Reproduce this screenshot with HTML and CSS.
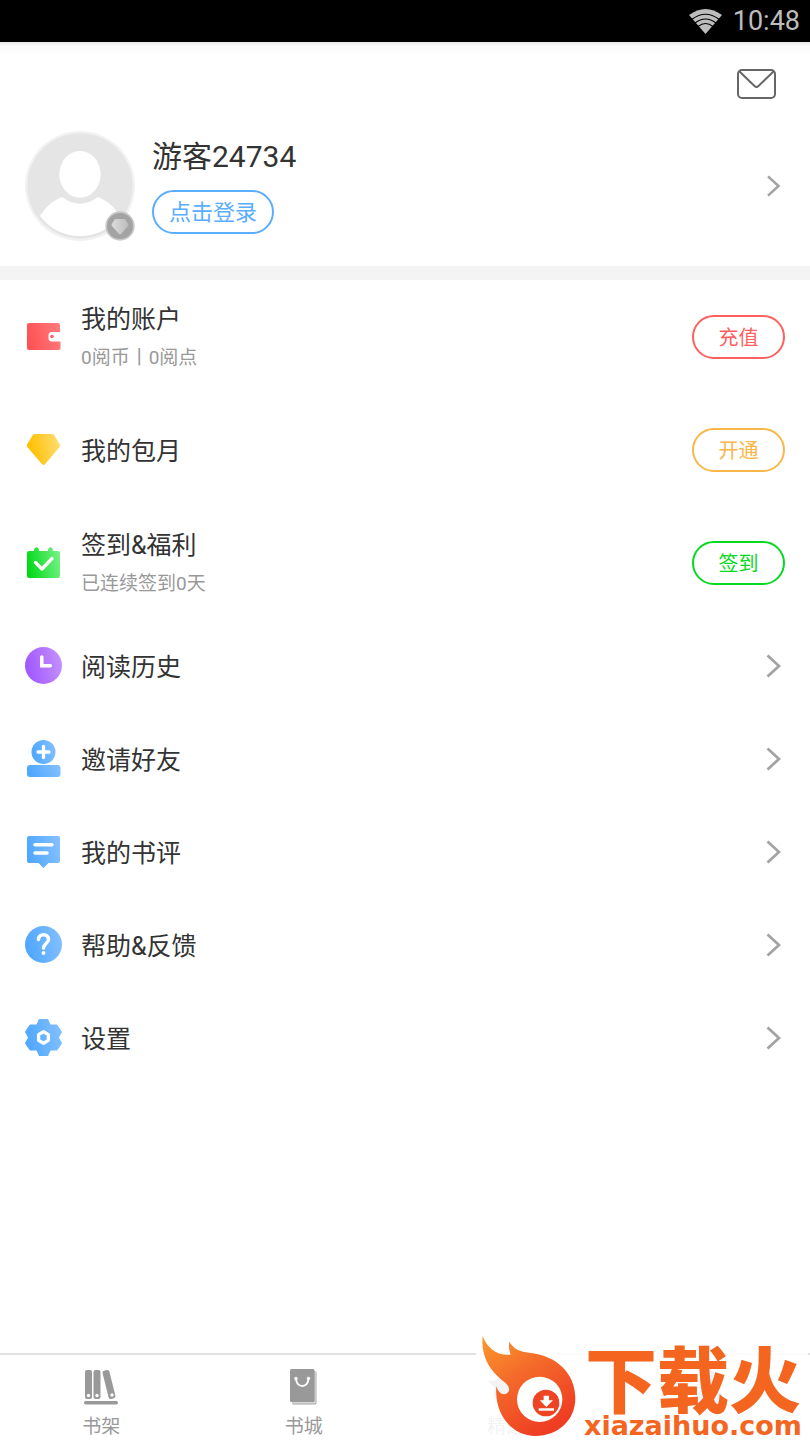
FILE: index.html
```html
<!DOCTYPE html>
<html lang="zh-CN">
<head>
<meta charset="utf-8">
<meta name="viewport" content="width=device-width, initial-scale=1">
<title>我的</title>
<link rel="stylesheet" href="styles.css">
</head>
<body>
<svg class="defs" width="0" height="0" aria-hidden="true">
  <defs>
    <linearGradient id="red" x1="0" x2="1" y1=".6" y2=".4"><stop stop-color="#ff5054"/><stop offset="1" stop-color="#ff7a7a"/></linearGradient>
    <linearGradient id="gold" x1="0" x2="1" y1=".6" y2=".4"><stop offset=".1" stop-color="#ffc000"/><stop offset="1" stop-color="#ffdc6e"/></linearGradient>
    <linearGradient id="green" x1="0" x2="1" y1=".6" y2=".4"><stop stop-color="#00d916"/><stop offset="1" stop-color="#74f184"/></linearGradient>
    <linearGradient id="purple" x1="0" x2="1" y1=".6" y2=".4"><stop stop-color="#9f55ff"/><stop offset="1" stop-color="#c490ff"/></linearGradient>
    <linearGradient id="blue" x1="0" x2="1" y1=".6" y2=".4"><stop stop-color="#4da6ff"/><stop offset="1" stop-color="#82bfff"/></linearGradient>
    <linearGradient id="silver" x1="0" x2="1"><stop stop-color="#dcdcdc"/><stop offset="1" stop-color="#bcbcbc"/></linearGradient>
    <linearGradient id="flame" x1="0" x2=".6" y1="0" y2="1"><stop stop-color="#fb9a2c"/><stop offset=".45" stop-color="#f46a2a"/><stop offset="1" stop-color="#ee3d23"/></linearGradient>
    <symbol id="chevron" viewBox="0 0 15 24"><path d="M1.500 1.500 13 12 1.500 22.500" fill="none" stroke="#a3a3a3" stroke-width="2.800"/></symbol>
  </defs>
</svg>

<div class="status">
  <svg class="wifi" viewBox="0 0 33 25" aria-hidden="true">
    <path fill="#bdbdbd" d="M16.500 25 0 6Q16.500-6 33 6Z"/>
    <g fill="none" stroke="#000" stroke-width="1.100"><path d="M3 10.200Q16.500.200 30 10.200"/><path d="M6 14Q16.500 6 27 14"/><path d="M9 17.500Q16.500 11.600 24 17.500"/></g>
  </svg>
  <time>10:48</time>
</div>

<header class="header">
  <button class="mail" aria-label="消息">
    <svg viewBox="0 0 39 30" aria-hidden="true"><g fill="none" stroke="#666" stroke-width="2"><rect x="1" y="1" width="37" height="28" rx="4"/><path d="m2 2 15.500 15q2 1.800 4 0L37 2"/></g></svg>
  </button>
  <div class="profile">
    <svg class="avatar" viewBox="0 0 330 330" aria-hidden="true">
      <circle cx="165" cy="165" r="165" fill="#f2f2f2"/><circle cx="165" cy="165" r="158" fill="#e5e5e5"/>
      <ellipse cx="165" cy="130" rx="62" ry="70" fill="#fff"/>
      <path fill="#fff" d="M45 255C60 231 83 208 112 199Q165 238 218 199C247 208 270 231 285 255A150 150 0 0 1 45 255Z"/>
      <circle cx="285" cy="285" r="44" fill="#c8c8c8"/><circle cx="285" cy="285" r="39" fill="#a3a3a3"/>
      <path fill="url(#silver)" d="M270 264h30l10 16q1 3-1 5l-21 24q-3 2-6 0l-21-24q-2-2-1-5Z"/>
    </svg>
    <div class="identity">
      <h1 class="name">游客24734</h1>
      <button class="pill login">点击登录</button>
    </div>
    <svg class="chevron small"><use href="#chevron"/></svg>
  </div>
</header>

<main class="main">
  <ul class="list">
    <li class="row tall">
      <svg class="icon" viewBox="0 0 37 37" aria-hidden="true"><path fill="url(#red)" d="M4 5h29a2 2 0 0 1 2 2v7h-8q-3.500 0-3.500 3.500v2.500q0 3.500 3.500 3.500h8.500v6.500a2 2 0 0 1-2 2H4a2 2 0 0 1-2-2V7a2 2 0 0 1 2-2Z"/><circle cx="27" cy="18.500" r="1.800" fill="#ff6266"/></svg>
      <div class="text"><h2 class="title">我的账户</h2><p class="sub">0阅币丨0阅点</p></div>
      <button class="pill recharge">充值</button>
    </li>
    <li class="row tall">
      <svg class="icon" viewBox="0 0 37 37" aria-hidden="true"><path fill="url(#gold)" d="M10 3h17q1.500 0 2.300 1.200l5.500 9.300q.7 1.200-.3 2.400L20 33.300q-1.500 1.500-3 0L2.300 16q-1-1.300-.3-2.500l5.700-9.300Q8.500 3 10 3Z"/></svg>
      <div class="text"><h2 class="title">我的包月</h2></div>
      <button class="pill open">开通</button>
    </li>
    <li class="row tall">
      <svg class="icon" viewBox="0 0 37 37" aria-hidden="true"><path fill="url(#green)" d="M4 7h5c0-5 5-5 5 0h9c0-5 5-5 5 0h5a2 2 0 0 1 2 2v23a2 2 0 0 1-2 2H4a2 2 0 0 1-2-2V9a2 2 0 0 1 2-2Z"/><path d="m10.500 18.500 6.500 6.500 10-10.500" fill="none" stroke="#fff" stroke-width="3.300" stroke-linecap="round" stroke-linejoin="round"/></svg>
      <div class="text"><h2 class="title">签到&amp;福利</h2><p class="sub">已连续签到0天</p></div>
      <button class="pill checkin">签到</button>
    </li>
    <li><a class="row" href="#history">
      <svg class="icon" viewBox="0 0 37 37" aria-hidden="true"><circle cx="18.500" cy="18.500" r="18.500" fill="url(#purple)"/><path d="M16.800 10v8.700h8.500" fill="none" stroke="#fff" stroke-width="3.500" stroke-linecap="round"/></svg>
      <span class="title">阅读历史</span><svg class="chevron"><use href="#chevron"/></svg></a></li>
    <li><a class="row" href="#invite">
      <svg class="icon" viewBox="0 0 37 37" aria-hidden="true"><circle cx="18.500" cy="12" r="12" fill="url(#blue)"/><path d="M18.500 6.500v11M13 12h11" stroke="#fff" stroke-width="3.300" stroke-linecap="round"/><rect x="2" y="25" width="33.500" height="12" rx="3" fill="url(#blue)"/></svg>
      <span class="title">邀请好友</span><svg class="chevron"><use href="#chevron"/></svg></a></li>
    <li><a class="row" href="#reviews">
      <svg class="icon" viewBox="0 0 37 37" aria-hidden="true"><path fill="url(#blue)" d="M4 3h29a2 2 0 0 1 2 2v23a2 2 0 0 1-2 2h-9.500l-5 5-5-5H4a2 2 0 0 1-2-2V5a2 2 0 0 1 2-2Z"/><path d="M10 11.700h17M10 20h12" stroke="#fff" stroke-width="3.500" stroke-linecap="round"/></svg>
      <span class="title">我的书评</span><svg class="chevron"><use href="#chevron"/></svg></a></li>
    <li><a class="row" href="#help">
      <svg class="icon" viewBox="0 0 37 37" aria-hidden="true"><circle cx="18.500" cy="18.500" r="18.500" fill="url(#blue)"/><path d="M13.500 13.500C13.500 7 23.500 7 23.500 13.500c0 4-5 4-5 8.500" fill="none" stroke="#fff" stroke-width="3.500" stroke-linecap="round"/><circle cx="18.500" cy="27" r="1.900" fill="#fff"/></svg>
      <span class="title">帮助&amp;反馈</span><svg class="chevron"><use href="#chevron"/></svg></a></li>
    <li><a class="row" href="#settings">
      <svg class="icon" viewBox="0 0 37 37" aria-hidden="true"><path fill="url(#blue)" d="M14 0h9l2.500 5.500h6.500q3 4 5 7.500L34 18.500l3 5.500q-2 4-5 7.500h-6.500L23 37h-9l-2.500-5.500H5Q2 28 0 24l3-5.500L0 13Q2 9 5 5.500h6.500Z"/><path d="m18.500 12.800 4.900 2.800v5.800L18.500 24.200l-4.900-2.800v-5.800Z" fill="none" stroke="#fff" stroke-width="3.300" stroke-linejoin="round"/></svg>
      <span class="title">设置</span><svg class="chevron"><use href="#chevron"/></svg></a></li>
  </ul>
</main>

<footer class="footer">
  <nav class="tabs">
    <a class="tab" href="#shelf">
      <svg class="tab-icon" viewBox="0 0 36 36" aria-hidden="true"><g fill="#999"><rect x="2" y="1" width="7" height="29" rx="2"/><rect x="10.500" y="1" width="7" height="29" rx="2"/><rect x="22.500" y="1" width="7" height="29" rx="2" transform="rotate(-14 26 15.500)"/><rect x="1" y="32" width="34" height="3.500" rx="1.700"/></g><g fill="#fff"><circle cx="5.500" cy="26.500" r="1.700"/><circle cx="14" cy="26.500" r="1.700"/><circle cx="29" cy="26" r="1.700"/></g></svg>
      <span>书架</span></a>
    <a class="tab" href="#store">
      <svg class="tab-icon" viewBox="0 0 36 36" aria-hidden="true"><rect x="6" y="2" width="24.500" height="33.500" rx="1.500" fill="#aaa"/><path d="M29 2v31.800H6" fill="none" stroke="#fff" stroke-width=".8"/><rect x="4" y="0" width="24.500" height="33" rx="1.500" fill="#999"/><path d="M10 9.500c0 10 12.500 10 12.500 0" fill="none" stroke="#fff" stroke-width="1.800"/><g fill="#fff"><circle cx="10" cy="9.500" r="1.700"/><circle cx="22.500" cy="9.500" r="1.700"/></g></svg>
      <span>书城</span></a>
    <a class="tab" href="#picks">
      <svg class="tab-icon" viewBox="0 0 36 36" aria-hidden="true"><path fill="#999" d="m14 2 5 9 9 1-7 7 2 10-9-5-9 5 2-10-7-7 9-1ZM24 18l10 10-8 7-8-8Z"/></svg>
      <span>精选</span></a>
    <a class="tab active" href="#me" aria-current="page" aria-label="我的">
      <svg class="tab-icon" viewBox="0 0 36 36" aria-hidden="true"><g fill="#4da6ff"><circle cx="18" cy="9" r="8"/><path d="M3 34c0-20 30-20 30 0Z"/></g></svg>
    </a>
  </nav>
  <div class="brand">
    <svg class="flame" viewBox="0 0 330 330" aria-hidden="true">
      <path fill="url(#flame)" d="M20 18C34 54 62 78 104 74 100 62 97 48 100 35 112 56 132 66 160 68 240 76 298 128 298 205 298 272 245 318 178 318 105 318 54 250 61 168 66 188 82 198 93 190 104 182 100 168 86 157 46 126 14 86 20 18Z"/>
      <circle cx="191" cy="208" r="68" fill="#fff"/><circle cx="210" cy="219" r="40" fill="#ee4423"/>
      <path fill="#fff" d="M203 197h16v14h12l-20 20-20-20h12ZM188 235h46v7h-46Z"/>
    </svg>
    <div class="wordmark"><strong class="brand-name">下载火</strong><span class="brand-url">xiazaihuo.com</span></div>
  </div>
</footer>
</body>
</html>
```

FILE: styles.css
```css
* { box-sizing: border-box; }

body {
  margin: 0;
  min-height: 100vh;
  display: flex;
  flex-direction: column;
  background: #fff;
  color: #333;
  font-family: Roboto, "Noto Sans CJK SC", sans-serif;
}

h1, h2, p, ul { margin: 0; padding: 0; font-weight: 400; }
ul { list-style: none; }
a { color: inherit; text-decoration: none; }
button { padding: 0; border: 0; background: none; font: inherit; cursor: pointer; }
svg { display: block; flex: none; }
.defs { position: absolute; }

.status {
  height: 42px;
  padding: 0 10px;
  display: flex;
  align-items: center;
  justify-content: flex-end;
  gap: 11px;
  background: #000;
  color: #bdbdbd;
  font-size: 27px;
}
.wifi { width: 33px; height: 25px; }

.header {
  display: flex;
  flex-direction: column;
  padding: 27px 25px 25px;
  border-bottom: 14px solid #f4f4f4;
  background: linear-gradient(#e8e8e8, #fafafa 4px, #fff 14px);
}
.mail { align-self: flex-end; margin-right: 9px; }
.mail svg { width: 39px; height: 30px; }

.profile { display: flex; align-items: center; gap: 17px; margin-top: 32px; }
.avatar { width: 110px; height: 110px; }
.identity { flex: 1; display: flex; flex-direction: column; align-items: flex-start; gap: 14px; }
.name { font-size: 30px; line-height: 38px; }

.pill {
  width: 93px;
  height: 44px;
  padding-top: 2px;
  border: 2px solid currentColor;
  border-radius: 22px;
  font-size: 20px;
  line-height: 38px;
}
.login { width: 122px; font-size: 22px; color: #5aadff; }
.recharge { color: #ff5f5f; }
.open { color: #fbb649; }
.checkin { color: #07d921; }

.chevron { width: 15px; height: 24px; margin-right: 4px; }
.chevron.small { height: 22px; }

.main { flex: 1; }
.row { display: flex; align-items: center; gap: 19px; min-height: 93px; padding: 0 25px; }
.row.tall { min-height: 113px; }
.icon { width: 37px; height: 37px; }
.text, .row > .title { flex: 1; padding-top: 4px; }
.title { font-size: 25px; line-height: 38px; }
.sub { color: #999; font-size: 19px; line-height: 38px; }

.footer { position: relative; }
.tabs { display: flex; border-top: 2px solid #e2e2e2; }
.tab {
  flex: 1;
  display: flex;
  flex-direction: column;
  align-items: center;
  gap: 9px;
  padding: 14px 0 0;
  color: #999;
  font-size: 19px;
  line-height: 26px;
}
.tab.active { color: #4da6ff; }
.tab-icon { width: 36px; height: 36px; }

.brand {
  position: absolute;
  right: 2px;
  bottom: 0;
  display: flex;
  align-items: flex-end;
  padding-right: 6px;
  background: rgb(255 255 255 / 88%);
  color: #f4651f;
}
.flame { width: 110px; height: 110px; margin-right: -2px; }
.wordmark { display: flex; flex-direction: column; align-items: center; }
.brand-name { font-family: "Noto Sans CJK SC", sans-serif; font-size: 72px; font-weight: 900; line-height: 72px; }
.brand-url { font-family: "DejaVu Sans", sans-serif; font-size: 27px; font-weight: 700; line-height: 28px; }
```
